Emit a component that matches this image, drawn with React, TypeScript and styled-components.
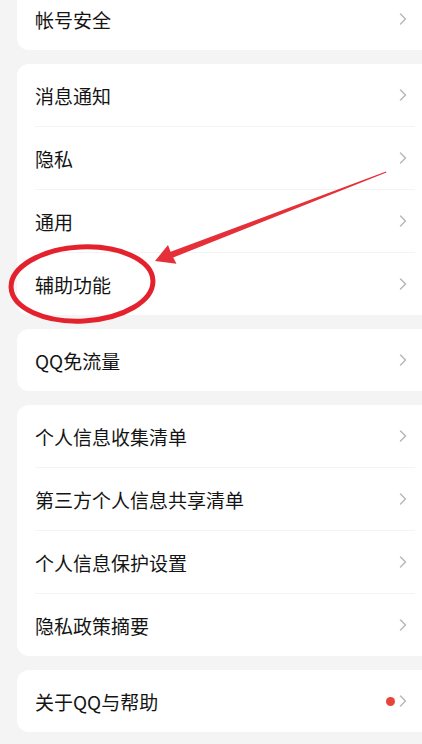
import styled, { createGlobalStyle } from "styled-components";

const GlobalStyle = createGlobalStyle`
  html, body {
    margin: 0;
    padding: 0;
    background: #f4f4f4;
    overflow: hidden;
  }
  * {
    box-sizing: border-box;
  }
`;

const groups: { label: string; dot?: boolean }[][] = [
  [{ label: "帐号安全" }],
  [
    { label: "消息通知" },
    { label: "隐私" },
    { label: "通用" },
    { label: "辅助功能" },
  ],
  [{ label: "QQ免流量" }],
  [
    { label: "个人信息收集清单" },
    { label: "第三方个人信息共享清单" },
    { label: "个人信息保护设置" },
    { label: "隐私政策摘要" },
  ],
  [{ label: "关于QQ与帮助", dot: true }],
];

const Chevron = () => (
  <svg width="8" height="14" viewBox="0 0 8 14">
    <path
      d="M1.5 2 L6.5 7 L1.5 12"
      fill="none"
      stroke="#b8b8b8"
      strokeWidth="1.5"
      strokeLinecap="round"
      strokeLinejoin="round"
    />
  </svg>
);

// red hand-drawn annotation on top of the list
const Annotation = () => (
  <Overlay width="422" height="744" viewBox="0 0 422 744">
    <ellipse
      cx="82"
      cy="284"
      rx="71"
      ry="37"
      fill="none"
      stroke="#e3222e"
      strokeWidth="5"
      transform="rotate(-3 82 284)"
    />
    <polygon
      points="155,261 168,245 170.6,251.8 386,171.5 386.4,172.5 173.2,257.5 176.5,263.8"
      fill="#e5303a"
    />
  </Overlay>
);

const App = () => {
  return (
    <>
      <GlobalStyle />
      <Page>
        {groups.map((group, gi) => (
          <Card key={gi} $first={gi === 0}>
            {group.map((item, i) => (
              <div key={item.label}>
                {i > 0 && <Divider />}
                <Row>
                  <Label>{item.label}</Label>
                  <Trailing>
                    {item.dot && <Dot />}
                    <Chevron />
                  </Trailing>
                </Row>
              </div>
            ))}
          </Card>
        ))}
      </Page>
      <Annotation />
    </>
  );
};

export default App;

const Page = styled.div`
  display: flex;
  flex-direction: column;
  gap: 14px;
  padding-left: 17px;
  width: 422px;
  height: 744px;
  overflow: hidden;
`;

const Card = styled.div<{ $first?: boolean }>`
  background: #ffffff;
  border-radius: 12px 0 0 12px;
  display: flex;
  flex-direction: column;
  margin-top: ${({ $first }) => ($first ? "-12px" : "0")};
  flex-shrink: 0;
`;

const Row = styled.div`
  height: 62px;
  display: flex;
  flex-direction: row;
  align-items: center;
  justify-content: space-between;
  padding: 0 15px 0 18px;
`;

const Divider = styled.div`
  height: 1px;
  background: #f4f4f4;
  margin: 0 7px 0 18px;
`;

const Label = styled.span`
  font-family: "Noto Sans CJK SC", "Noto Sans", sans-serif;
  font-size: 19px;
  color: #141414;
  line-height: 1;
`;

const Trailing = styled.div`
  display: flex;
  flex-direction: row;
  align-items: center;
  gap: 4px;
`;

const Dot = styled.span`
  width: 9px;
  height: 9px;
  border-radius: 50%;
  background: #e8443a;
`;

const Overlay = styled.svg`
  position: absolute;
  top: 0;
  left: 0;
  pointer-events: none;
`;
